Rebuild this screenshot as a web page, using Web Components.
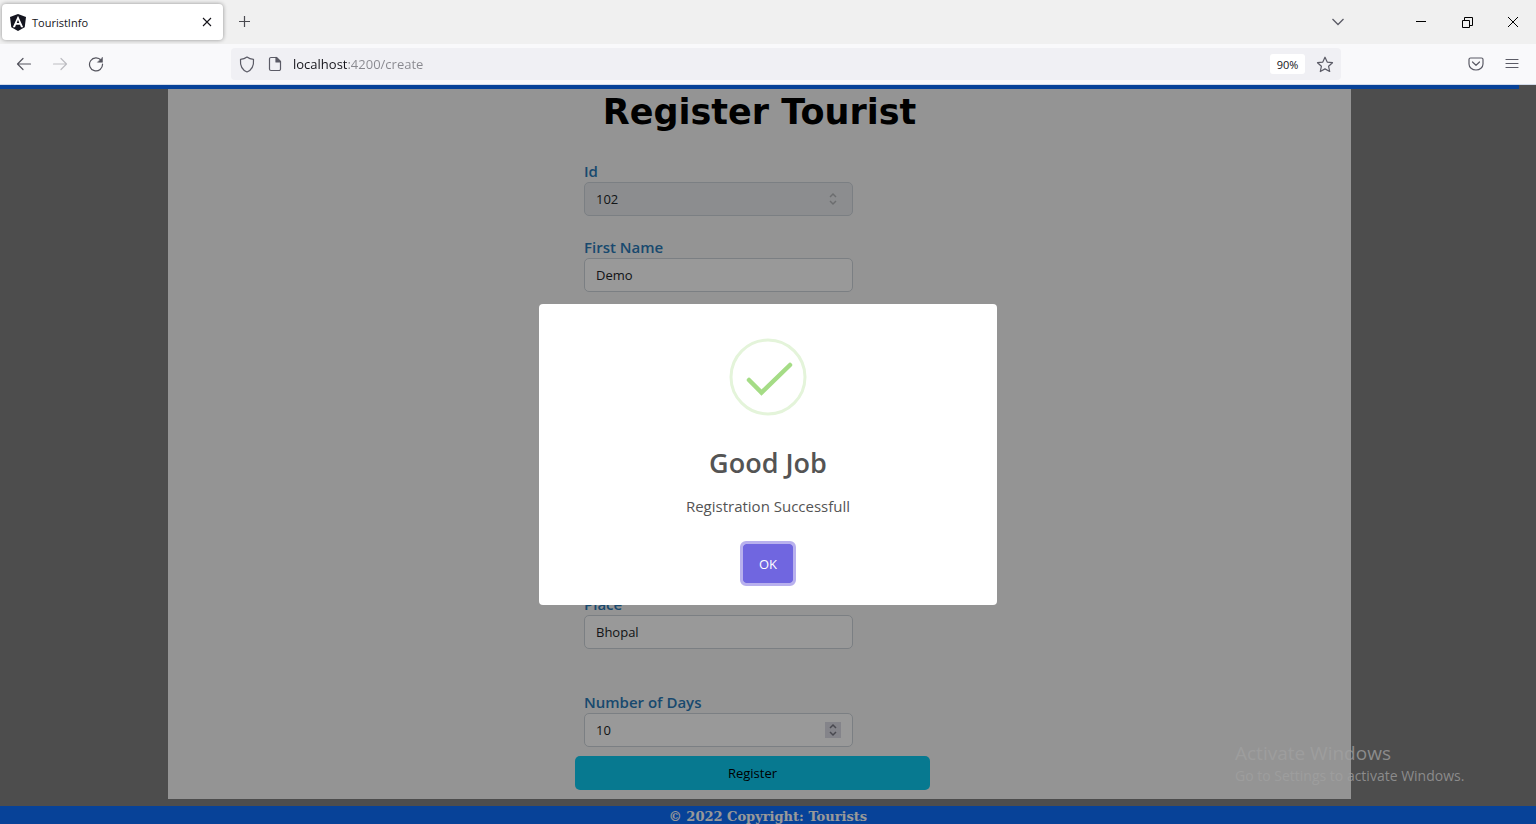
<!DOCTYPE html>
<html lang="en">
<head>
<meta charset="utf-8">
<title>TouristInfo</title>
<style>
  html, body { margin: 0; height: 100%; }
  body { font-family: "Open Sans", "Noto Sans", sans-serif; overflow: hidden; }
</style>
</head>
<body>
<browser-window>
  <tab-strip slot="chrome"></tab-strip>
  <nav-bar slot="chrome"></nav-bar>
  <tourist-page>
    <form-field label="Id" value="102" type="number" disabled></form-field>
    <form-field label="First Name" value="Demo"></form-field>
    <form-field label="Place" value="Bhopal" class="place"></form-field>
    <form-field label="Number of Days" value="10" type="number" class="days"></form-field>
  </tourist-page>
  <alert-dialog slot="overlay" heading="Good Job">Registration Successfull</alert-dialog>
  <activation-notice slot="notice"></activation-notice>
</browser-window>

<script>
const define = (name, html, setup) => {
  const template = document.createElement('template');
  template.innerHTML = html;
  customElements.define(name, class extends HTMLElement {
    constructor() {
      super();
      this.attachShadow({ mode: 'open' }).append(template.content.cloneNode(true));
    }
    connectedCallback() { if (setup) setup(this, this.shadowRoot); }
  });
};

define('browser-window', `
  <style>
    :host { display: flex; flex-direction: column; height: 100vh; position: relative; overflow: hidden; }
    .view { flex: 1; min-height: 0; position: relative; overflow: hidden; display: flex; flex-direction: column; }
  </style>
  <slot name="chrome"></slot>
  <div class="view"><slot></slot><slot name="overlay"></slot></div>
  <slot name="notice"></slot>`);

define('tab-strip', `
  <style>
    :host { display: flex; height: 44px; box-sizing: border-box; background: #f0f0f0; align-items: center; color: #15141a; }
    button { border: 0; padding: 0; background: none; color: inherit; display: grid; place-items: center; }
    svg { display: block; fill: none; stroke: currentColor; }
    .tab { display: flex; align-items: center; box-sizing: border-box; width: 221px; height: 36px; margin-left: 2px; padding: 0 8px;
      background: #fff; border-radius: 4px; box-shadow: 0 0 4px rgba(0,0,0,.4); font-size: 11px; color: #15141a; }
    .tab span { flex: 1; margin-left: 6px; }
    .close { width: 16px; height: 16px; }
    .new { width: 32px; height: 32px; margin-left: 6px; color: #4a4a50; }
    .list { margin-left: auto; width: 32px; height: 32px; color: #5b5b66; }
    .controls { display: flex; margin-left: 44px; color: #000; }
    .controls button { width: 46px; height: 36px; }
  </style>
  <div class="tab">
    <svg width="16" height="17" viewBox="0 0 16 17" stroke="none">
      <path fill="#14151f" stroke="none" d="M8 0l8 3-1.300 10.200L8 17l-6.700-3.800L0 3z"/>
      <path fill="#fff" stroke="none" fill-rule="evenodd" d="M8 1.800l5.200 11.400h-2.200l-1-2.500H6l-1 2.500H2.800zM8 5.700L6.700 8.900h2.600z"/>
    </svg>
    <span>TouristInfo</span>
    <button class="close" aria-label="Close tab"><svg width="10" height="10" stroke-width="1.100"><path d="M1 1l8 8M9 1l-8 8"/></svg></button>
  </div>
  <button class="new" aria-label="New tab"><svg width="12" height="12" stroke-width="1.200"><path d="M5.500 0v11M0 5.500h11"/></svg></button>
  <button class="list" aria-label="List tabs"><svg width="12" height="8" stroke-width="1.300"><path d="M0.500 1l5.500 5.500L11.500 1"/></svg></button>
  <div class="controls">
    <button aria-label="Minimize"><svg width="10" height="10"><path d="M0 4.500h10"/></svg></button>
    <button aria-label="Restore"><svg width="11" height="11"><path d="M.500 3.500h7v7H.500zM2.500 3V.500h8v8H8"/></svg></button>
    <button aria-label="Close"><svg width="10" height="10"><path d="M0 0l10 10M10 0L0 10"/></svg></button>
  </div>`);

define('nav-bar', `
  <style>
    :host { display: flex; height: 41px; box-sizing: border-box; padding: 0 8px; background: #f9f9fb; align-items: center; color: #5b5b66;
      border-bottom: 1px solid #d3dbe9; }
    button { border: 0; padding: 0; width: 32px; height: 32px; background: none; color: inherit; display: grid; place-items: center; font-family: inherit; }
    svg { display: block; fill: none; stroke: currentColor; stroke-width: 1.200; stroke-linecap: round; stroke-linejoin: round; }
    .nav { display: flex; gap: 4px; width: 223px; color: #55555e; }
    .nav [disabled] { color: #bdbdc2; }
    .address { display: flex; align-items: center; flex: 1; height: 32px; border-radius: 4px; background: #f0f0f4; padding-right: 2px; }
    .address button { width: 28px; }
    .address .shield { width: 32px; }
    .address .site { width: 24px; }
    input { flex: 1; min-width: 0; border: 0; outline: 0; padding: 0; margin-left: 6px; font: 13px/22px "Open Sans", sans-serif; color: transparent;
      background: linear-gradient(90deg, #15141a 54px, #88888e 54px); background-clip: text; -webkit-background-clip: text; }
    .address .zoom { width: 35px; height: 20px; border-radius: 3px; background: #fff; color: #15141a; font-size: 11px; margin-right: 6px; }
    .tools { display: flex; gap: 4px; margin-left: 119px; }
  </style>
  <div class="nav">
    <button aria-label="Back"><svg width="16" height="16"><path d="M14.500 8H1.500M7 2.500L1.500 8 7 13.500"/></svg></button>
    <button aria-label="Forward" disabled><svg width="16" height="16"><path d="M1.500 8h13M9 2.500L14.500 8 9 13.500"/></svg></button>
    <button aria-label="Reload"><svg width="16" height="16"><path d="M13.200 4.500A6.500 6.500 0 1 0 14.500 8"/><path d="M14.500 1.500v4.800H9.700z" fill="currentColor" stroke-width=".500"/></svg></button>
  </div>
  <div class="address">
    <button class="shield" aria-label="Tracking protection"><svg width="16" height="17"><path d="M8 1C6.500 2.200 4 3.200 1.500 3.300 1 9.500 3 14 8 16c5-2 7-6.500 6.500-12.700C12 3.200 9.500 2.200 8 1z"/></svg></button>
    <button class="site" aria-label="Site information"><svg width="14" height="16"><path d="M3 1.500h5.500l4 4v7.500a1.500 1.500 0 0 1-1.500 1.500H3A1.500 1.500 0 0 1 1.500 13V3A1.500 1.500 0 0 1 3 1.500z"/><path d="M8 1.500v4.500h4.500z" fill="currentColor"/></svg></button>
    <input type="text" value="localhost:4200/create" aria-label="Address">
    <button class="zoom">90%</button>
    <button class="star" aria-label="Bookmark"><svg width="18" height="17"><path d="M9 1.200l2.200 4.900 5.300.600-3.900 3.600 1.100 5.200L9 12.900l-4.700 2.600 1.100-5.200L1.500 6.700l5.300-.600z"/></svg></button>
  </div>
  <div class="tools">
    <button aria-label="Save to Pocket"><svg width="16" height="16"><path d="M2.500 2h11A1.500 1.500 0 0 1 15 3.500V8A7 6 0 0 1 1 8V3.500A1.500 1.500 0 0 1 2.500 2zM4.500 6L8 9.300 11.500 6"/></svg></button>
    <button aria-label="Menu"><svg width="14" height="12"><path d="M1 1.500h12M1 5.500h12M1 9.500h12"/></svg></button>
  </div>`);

define('tourist-page', `
  <style>
    :host { display: flex; flex-direction: column; flex: 1; background: #808080; }
    header { height: 4px; margin-right: 17px; background: #0d6efd; }
    main { flex: 1; margin: 0 185px 7px 168px; background: #f7f7f7; }
    h1 { margin: 0 0 25px; font: 700 35px/46px "DejaVu Sans", sans-serif; text-align: center; color: #000; }
    form { width: 355px; margin: 0 auto; display: flex; flex-direction: column; }
    .shift { padding-right: 14px; }
    .fields { display: flex; flex-direction: column; gap: 20px; margin: 0 77px 9px 9px; }
    ::slotted(.place) { margin-top: 281px; }
    ::slotted(.days) { margin-top: 22px; }
    button { height: 34px; border: 0; border-radius: 5px; background: #0dcaf0; color: #000; font: 13px/20px "Open Sans", sans-serif; }
    footer { height: 18px; overflow: hidden; background: #0d6efd; color: #fff; text-align: center; font: 700 13px/22px "DejaVu Serif", serif; }
  </style>
  <header></header>
  <main>
    <h1>Register Tourist</h1>
    <div class="shift"><form>
      <div class="fields"><slot></slot></div>
      <button type="button">Register</button>
    </form></div>
  </main>
  <footer>© 2022 Copyright: Tourists</footer>`);

define('form-field', `
  <style>
    :host { display: flex; flex-direction: column; }
    label { font-size: 15px; line-height: 22px; font-weight: 600; color: #2a7ab8; }
    .box { display: flex; align-items: center; box-sizing: border-box; height: 34px; border: 1px solid #ced4da; border-radius: 5px; background: #fff; padding: 0 11px; }
    :host([disabled]) .box { background: #e9ecef; }
    input { flex: 1; min-width: 0; border: 0; padding: 0; outline: 0; background: none; color: #212529; font: 13px/20px "Open Sans", sans-serif; appearance: textfield; }
    input::-webkit-inner-spin-button { display: none; }
    .spin { width: 16px; height: 16px; background: #dcdce6; color: #7a7a85; display: none; }
    :host([type=number]) .spin { display: block; }
    :host([disabled]) .spin { background: none; color: #b4b6ba; }
    svg { display: block; fill: none; stroke: currentColor; stroke-width: 1.500; }
  </style>
  <label for="control"></label>
  <div class="box">
    <input id="control">
    <span class="spin"><svg width="16" height="16"><path d="M5 6l3-3 3 3M5 10l3 3 3-3"/></svg></span>
  </div>`, (host, root) => {
  root.querySelector('label').textContent = host.getAttribute('label');
  const input = root.querySelector('input');
  input.type = host.getAttribute('type') || 'text';
  input.value = host.getAttribute('value');
  input.disabled = host.hasAttribute('disabled');
});

define('alert-dialog', `
  <style>
    :host { position: absolute; inset: 0; display: grid; place-items: center; background: rgba(0,0,0,.4); }
    section { display: flex; flex-direction: column; align-items: center; box-sizing: border-box; width: 458px; padding: 34px 0 19px; border-radius: 4px; background: #fff; color: #545454; }
    svg { display: block; fill: none; }
    h2 { margin: 28px 0 0; font-size: 27px; line-height: 38px; font-weight: 600; }
    p { margin: 12px 0 23px; font-size: 15px; line-height: 24px; }
    button { width: 56px; height: 45px; border: 3px solid #b8b0ee; border-radius: 6px; padding: 0; background: #7066e0; background-clip: padding-box; color: #fff; font: 13px/20px "Open Sans", sans-serif; }
  </style>
  <section role="dialog" aria-modal="true" aria-labelledby="heading">
    <svg width="78" height="78">
      <circle cx="39" cy="39" r="37" stroke="#e4f4da" stroke-width="3"/>
      <path d="M20 42l12.500 12.500L61 27" stroke="#a5dc86" stroke-width="4.500" stroke-linecap="round"/>
    </svg>
    <h2 id="heading"></h2>
    <p><slot></slot></p>
    <button type="button">OK</button>
  </section>`, (host, root) => {
  root.querySelector('h2').textContent = host.getAttribute('heading');
});

define('activation-notice', `
  <style>
    :host { position: absolute; right: 65px; bottom: 38px; width: 236px; color: rgba(161,161,161,.75); pointer-events: none; white-space: nowrap; }
    div { font-size: 19px; line-height: 26px; }
    small { display: block; font-size: 14px; line-height: 20px; }
  </style>
  <div>Activate Windows</div>
  <small>Go to Settings to activate Windows.</small>`);
</script>
</body>
</html>
